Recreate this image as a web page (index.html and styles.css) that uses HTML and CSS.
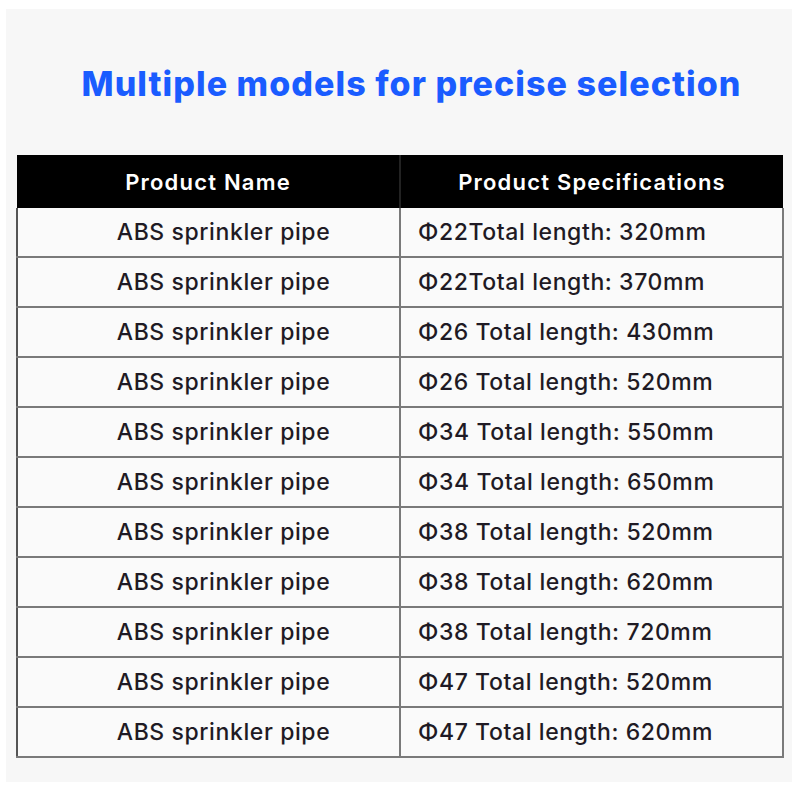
FILE: index.html
```html
<!DOCTYPE html>
<html>
<head>
<meta charset="utf-8">
<link rel="stylesheet" href="styles.css">
</head>
<body>
<div class="panel">
  <h1 class="title">Multiple models for precise selection</h1>
  <table class="spec">
    <thead>
      <tr><th>Product Name</th><th>Product Specifications</th></tr>
    </thead>
    <tbody>
      <tr><td class="name">ABS sprinkler pipe</td><td class="val">Φ22Total length: 320mm</td></tr>
      <tr><td class="name">ABS sprinkler pipe</td><td class="val">Φ22Total length: 370mm</td></tr>
      <tr><td class="name">ABS sprinkler pipe</td><td class="val">Φ26 Total length: 430mm</td></tr>
      <tr><td class="name">ABS sprinkler pipe</td><td class="val">Φ26 Total length: 520mm</td></tr>
      <tr><td class="name">ABS sprinkler pipe</td><td class="val">Φ34 Total length: 550mm</td></tr>
      <tr><td class="name">ABS sprinkler pipe</td><td class="val">Φ34 Total length: 650mm</td></tr>
      <tr><td class="name">ABS sprinkler pipe</td><td class="val">Φ38 Total length: 520mm</td></tr>
      <tr><td class="name">ABS sprinkler pipe</td><td class="val">Φ38 Total length: 620mm</td></tr>
      <tr><td class="name">ABS sprinkler pipe</td><td class="val">Φ38 Total length: 720mm</td></tr>
      <tr><td class="name">ABS sprinkler pipe</td><td class="val">Φ47 Total length: 520mm</td></tr>
      <tr><td class="name">ABS sprinkler pipe</td><td class="val">Φ47 Total length: 620mm</td></tr>
    </tbody>
  </table>
</div>
</body>
</html>
```

FILE: styles.css
```css
html, body {
  margin: 0;
  padding: 0;
  background: #ffffff;
}
body {
  padding: 9px 8px 18px 6px;
  font-family: "Inter", "Open Sans", sans-serif;
}
.panel {
  background: #f7f7f7;
  height: 773px;
  box-sizing: border-box;
  padding-left: 10px;
  display: flex;
  flex-direction: column;
}
.title {
  margin: 55px 0 0 0;
  height: 91px;
  text-align: center;
  color: #1a5cff;
  font-family: "Inter", sans-serif;
  font-weight: 800;
  font-size: 34px;
  line-height: 40px;
  letter-spacing: 1.05px;
  padding-left: 15px;
}
.spec {
  width: 768px;
  border-collapse: collapse;
  table-layout: fixed;
}
.spec th {
  background: #000;
  color: #fff;
  font-weight: 600;
  font-size: 22px;
  letter-spacing: 1.2px;
  height: 53px;
  padding: 0;
  text-align: center;
  border-right: 2px solid #222;
}
.spec th:last-child { border-right: 0; }
.spec td {
  height: 48px;
  padding: 0;
  background: #fafafa;
  color: #1f1a24;
  font-size: 23px;
  letter-spacing: 0.6px;
  font-weight: 500;
  border: 2px solid #7a7a7a;
  border-top: 0;
}
.spec td.name {
  text-align: center;
  padding-left: 30px;
  border-left-color: #555;
}
.spec td.val {
  text-align: left;
  padding-left: 17px;
}
```
